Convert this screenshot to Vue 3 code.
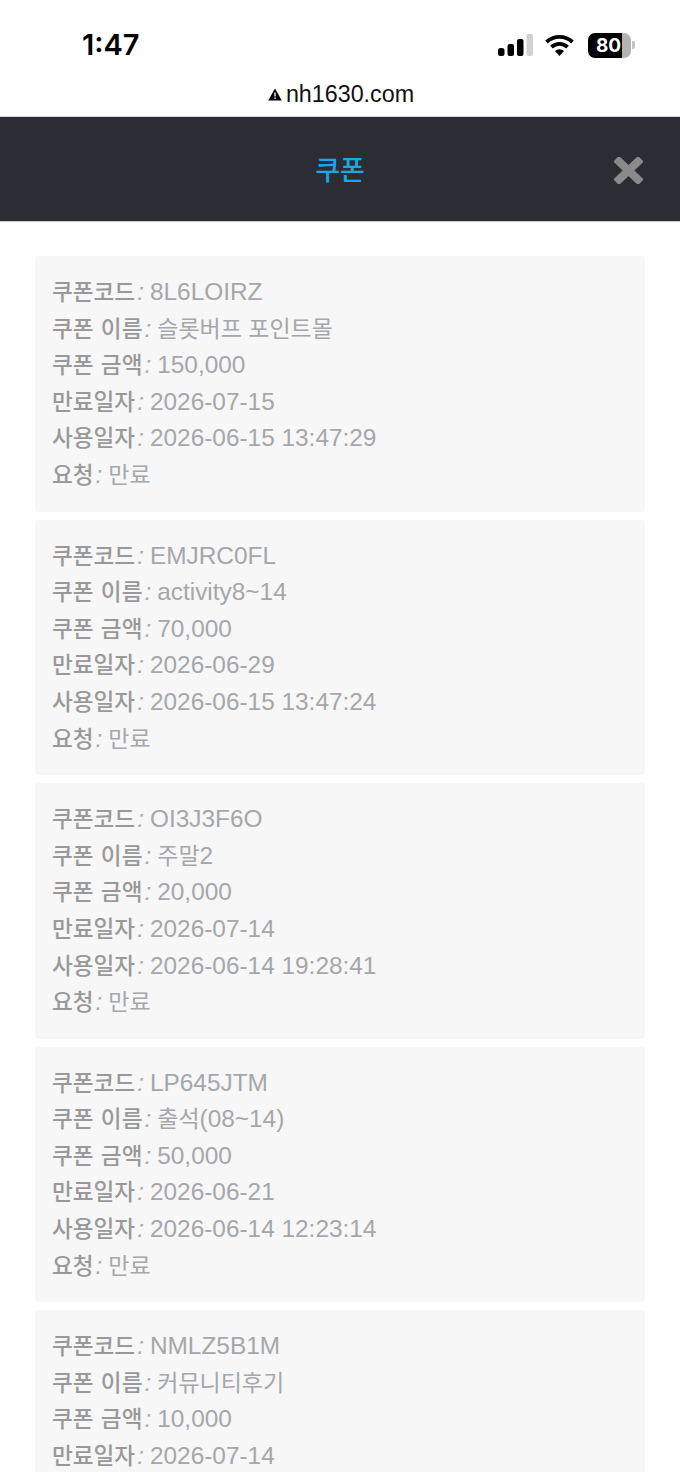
<template>
  <div class="page">
    <!-- 상태바 -->
    <div class="status-bar">
      <span class="time">1:47</span>
      <div class="status-icons">
        <svg class="signal" width="35" height="22" viewBox="0 0 35 22">
          <rect x="0" y="14" width="6.5" height="8" rx="2.5" fill="#000" />
          <rect x="9.5" y="10" width="6.5" height="12" rx="2" fill="#000" />
          <rect x="19" y="5" width="6.5" height="17" rx="2" fill="#000" />
          <rect x="28.5" y="0" width="6.5" height="22" rx="2" fill="#d2d2d2" />
        </svg>
        <svg class="wifi" width="29" height="22" viewBox="0 0 29 22">
          <path d="M1.5 8 A19 19 0 0 1 27.5 8" fill="none" stroke="#000" stroke-width="3.8" />
          <path d="M6.5 13.2 A11.5 11.5 0 0 1 22.5 13.2" fill="none" stroke="#000" stroke-width="3.8" />
          <path d="M10 17 L14.5 22 L19 17 A7 7 0 0 0 10 17 Z" fill="#000" />
        </svg>
        <div class="battery">
          <div class="battery-body">
            <span class="battery-level">80</span>
          </div>
          <span class="battery-cap"></span>
        </div>
      </div>
    </div>

    <!-- 주소창 -->
    <div class="url-bar">
      <svg width="14" height="13" viewBox="0 0 14 13">
        <path d="M7 0.5 L13.8 12.5 H0.2 Z" fill="#000" />
        <rect x="6.3" y="4.5" width="1.4" height="4" fill="#fff" />
        <rect x="6.3" y="9.4" width="1.4" height="1.5" fill="#fff" />
      </svg>
      <span>nh1630.com</span>
    </div>

    <!-- 헤더 -->
    <header class="header">
      <h1 class="title">쿠폰</h1>
      <svg class="close" width="29" height="27" viewBox="0 0 29 27">
        <path d="M5 4.5 L24 22.5 M24 4.5 L5 22.5" stroke="#8a8a8a" stroke-width="8" stroke-linecap="square" />
      </svg>
    </header>

    <!-- 쿠폰 목록 -->
    <div class="coupon-list">
      <div v-for="coupon in coupons" :key="coupon.code" class="coupon-card">
        <div v-for="row in rowsFor(coupon)" :key="row.label" class="coupon-row">
          <span class="row-label">{{ row.label }}</span><span class="row-colon">:</span>
          <span class="row-value"><span
            v-for="(part, i) in splitHangul(row.value)"
            :key="i"
            :class="{ hangul: part.hangul }"
          >{{ part.text }}</span></span>
        </div>
      </div>
    </div>
  </div>
</template>

<script setup>
const coupons = [
  { code: '8L6LOIRZ', name: '슬롯버프 포인트몰', amount: '150,000', expires: '2026-07-15', used: '2026-06-15 13:47:29', status: '만료' },
  { code: 'EMJRC0FL', name: 'activity8~14', amount: '70,000', expires: '2026-06-29', used: '2026-06-15 13:47:24', status: '만료' },
  { code: 'OI3J3F6O', name: '주말2', amount: '20,000', expires: '2026-07-14', used: '2026-06-14 19:28:41', status: '만료' },
  { code: 'LP645JTM', name: '출석(08~14)', amount: '50,000', expires: '2026-06-21', used: '2026-06-14 12:23:14', status: '만료' },
  { code: 'NMLZ5B1M', name: '커뮤니티후기', amount: '10,000', expires: '2026-07-14', used: '', status: '만료' },
];

const rowsFor = (coupon) => [
  { label: '쿠폰코드', value: coupon.code },
  { label: '쿠폰 이름', value: coupon.name },
  { label: '쿠폰 금액', value: coupon.amount },
  { label: '만료일자', value: coupon.expires },
  { label: '사용일자', value: coupon.used },
  { label: '요청', value: coupon.status },
];

// 한글은 라틴 글자보다 살짝 작게 보여서 따로 크기를 준다
const splitHangul = (text) =>
  (text.match(/[가-힣 ]+|[^가-힣 ]+/g) || []).map((part) => ({
    text: part,
    hangul: /[가-힣]/.test(part),
  }));
</script>

<style>
html, body {
  margin: 0;
  background: #fff;
}
</style>

<style scoped>
.page {
  width: 680px;
  height: 1472px;
  overflow: hidden;
  background: #fff;
  font-family: "Liberation Sans", "Noto Sans CJK KR", sans-serif;
}

.status-bar {
  height: 78px;
  box-sizing: border-box;
  padding: 24px 45px 0 82px;
  display: flex;
  justify-content: space-between;
  align-items: flex-start;
}

.time {
  font-family: Inter, "Liberation Sans", sans-serif;
  font-size: 29px;
  line-height: 42px;
  font-weight: 600;
  color: #000;
}

.status-icons {
  display: flex;
  align-items: center;
  gap: 12px;
  height: 42px;
}

.battery {
  display: flex;
  align-items: center;
  gap: 1px;
  margin-left: 2px;
}

.battery-body {
  width: 43px;
  height: 25px;
  border-radius: 7px;
  background: linear-gradient(90deg, #000 0 80%, #b4b4b4 80% 100%);
  display: flex;
  align-items: center;
  padding-left: 8px;
  box-sizing: border-box;
}

.battery-level {
  color: #fff;
  font-family: Inter, "Liberation Sans", sans-serif;
  font-size: 19px;
  font-weight: 700;
  line-height: 25px;
}

.battery-cap {
  width: 3px;
  height: 8px;
  background: #c4c4c4;
  border-radius: 0 2px 2px 0;
}

.url-bar {
  height: 38px;
  box-sizing: content-box;
  height: 32px;
  padding: 0 0 6px 2px;
  display: flex;
  justify-content: center;
  align-items: center;
  gap: 4px;
  font-size: 23.3px;
  color: #111;
  border-bottom: 1px solid #d4d4d8;
}

.header {
  height: 102px;
  padding-bottom: 2px;
  background: #2c2c34;
  display: flex;
  align-items: center;
  justify-content: center;
  position: relative;
  border-bottom: 1px solid #c8c8cc;
}

.title {
  margin: 0;
  font-size: 27px;
  font-weight: 500;
  color: #1ba7e6;
}

.close {
  position: absolute;
  right: 37px;
  top: 40px;
}

.coupon-list {
  padding: 34px 35px 0;
  display: flex;
  flex-direction: column;
  gap: 8px;
}

.coupon-card {
  background: #f7f7f7;
  padding: 18px 17px;
  border-radius: 3px;
}

.coupon-row {
  height: 36.6px;
  font-size: 24.4px;
  line-height: 36.6px;
  color: #a5a7aa;
  white-space: nowrap;
}

.row-label {
  font-size: 22.6px;
  line-height: 1;
  font-weight: 500;
  word-spacing: 1px;
  color: #999;
}

.row-colon {
  margin: 0 6px 0 2px;
  line-height: 1;
  font-style: italic;
  color: #aaa;
}

.row-value {
  line-height: 1;
}

.hangul {
  font-size: 23px;
  line-height: 1;
}
</style>
